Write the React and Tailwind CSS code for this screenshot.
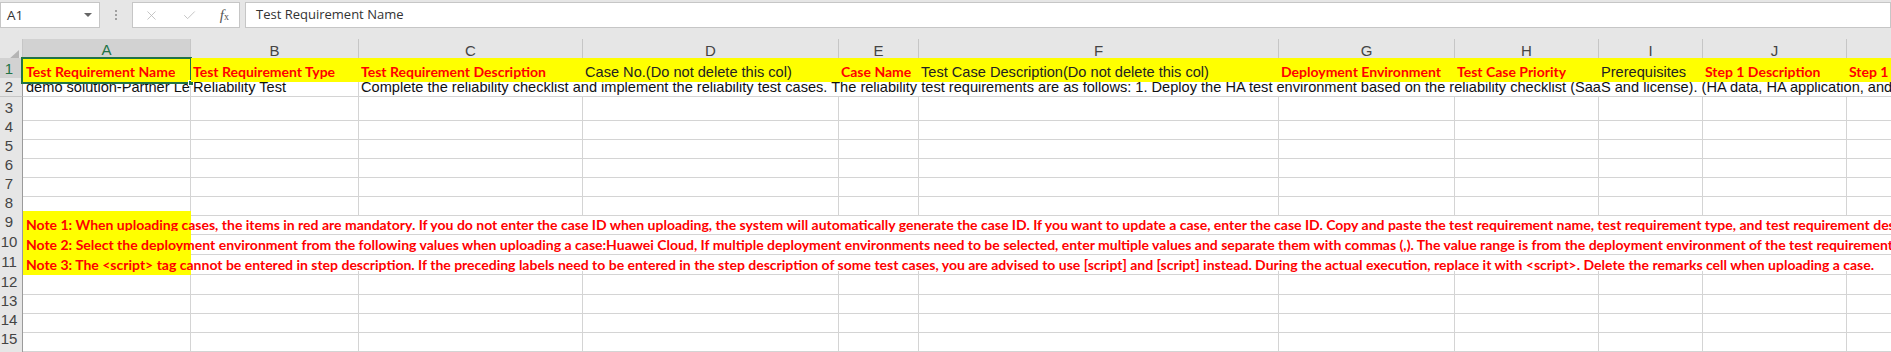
import React from 'react';
import { X, Check } from 'lucide-react';

const grid =
  'grid w-max grid-cols-[23px_168px_168px_224px_256px_80px_360px_176px_144px_104px_144px_144px]';
const bold = "font-['Lato',sans-serif] font-bold text-[14px] text-[#ff0000]";
const plain = "font-['Liberation_Sans',sans-serif] text-[14.6px]";
const line = 'border-r border-b border-[#d4d4d4]';

const letters = ['A', 'B', 'C', 'D', 'E', 'F', 'G', 'H', 'I', 'J', 'K'];

const headerCells = [
  { t: 'Test Requirement Name', red: true },
  { t: 'Test Requirement Type', red: true },
  { t: 'Test Requirement Description', red: true },
  { t: 'Case No.(Do not delete this col)' },
  { t: 'Case Name', red: true },
  { t: 'Test Case Description(Do not delete this col)' },
  { t: 'Deployment Environment', red: true },
  { t: 'Test Case Priority', red: true },
  { t: 'Prerequisites' },
  { t: 'Step 1 Description', red: true },
  { t: 'Step 1 Expected Result', red: true },
];

const notes = [
  'Note 1: When uploading cases, the items in red are mandatory. If you do not enter the case ID when uploading, the system will automatically generate the case ID. If you want to update a case, enter the case ID. Copy and paste the test requirement name, test requirement type, and test requirement description from the test requirement list.',
  'Note 2: Select the deployment environment from the following values when uploading a case:Huawei Cloud, If multiple deployment environments need to be selected, enter multiple values and separate them with commas (,). The value range is from the deployment environment of the test requirement.',
  'Note 3: The <script> tag cannot be entered in step description. If the preceding labels need to be entered in the step description of some test cases, you are advised to use [script] and [script] instead. During the actual execution, replace it with <script>. Delete the remarks cell when uploading a case.',
];

function RowHead({ n, active }) {
  return (
    <div
      className={`flex items-center justify-center pr-[4px] border-b border-r font-['Liberation_Sans',sans-serif] text-[15px] ${
        active
          ? 'bg-[#d2d2d2] text-[#217346] border-b-[#c6c6c6] border-r-[#217346]'
          : 'bg-[#e6e6e6] text-[#444] border-b-[#c6c6c6] border-r-[#9b9b9b]'
      }`}
    >
      {n}
    </div>
  );
}

function EmptyRow({ n }) {
  return (
    <div className={`${grid} h-[19px]`}>
      <RowHead n={n} />
      {letters.map((l) => (
        <div key={l} className={line} />
      ))}
    </div>
  );
}

function Toolbar() {
  return (
    <div className="h-[39px] bg-[#e6e6e6] pt-[2px] flex items-start">
      <div className="w-[100px] h-[26px] bg-white border border-[#c6c6c6] flex items-center justify-between pl-[6px] pr-[7px]">
        <span className="font-['Open_Sans',sans-serif] text-[13.5px] text-[#333]">A1</span>
        <span className="w-0 h-0 border-l-[4px] border-r-[4px] border-t-[4px] border-l-transparent border-r-transparent border-t-[#666]" />
      </div>
      <div className="w-[32px] h-[26px] flex flex-col items-center justify-center gap-[2px]">
        <span className="w-[2px] h-[2px] bg-[#a0a0a0]" />
        <span className="w-[2px] h-[2px] bg-[#a0a0a0]" />
        <span className="w-[2px] h-[2px] bg-[#a0a0a0]" />
      </div>
      <div className="w-[108px] h-[26px] bg-white border border-[#c6c6c6] flex items-center justify-between pl-[11px] pr-[10px]">
        <X size={15} strokeWidth={1.3} className="text-[#b8b8b8]" />
        <Check size={15} strokeWidth={1.3} className="text-[#b8b8b8]" />
        <span className="font-['Liberation_Serif',serif] italic text-[15px] text-[#555] leading-none">
          f<span className="text-[10px] not-italic">x</span>
        </span>
      </div>
      <div className="ml-[5px] flex-1 h-[26px] bg-white border border-[#c6c6c6] flex items-center pl-[10px]">
        <span className="font-['Open_Sans',sans-serif] text-[13px] text-[#333]">Test Requirement Name</span>
      </div>
    </div>
  );
}

export default function App() {
  return (
    <div className="w-[1891px] h-[352px] overflow-hidden bg-white">
      <Toolbar />

      {/* column letters */}
      <div className={`${grid} h-[19px] bg-[#e6e6e6]`}>
        <div className="border-r border-b border-r-[#c6c6c6] border-b-[#9b9b9b] flex items-end justify-end p-[3px]">
          <svg width="11" height="10" viewBox="0 0 11 10">
            <polygon points="11,0 11,10 0,10" fill="#b4b4b4" />
          </svg>
        </div>
        {letters.map((l, i) => (
          <div
            key={l}
            className={`flex items-center justify-center font-['Liberation_Sans',sans-serif] text-[15px] border-r border-r-[#c6c6c6] ${
              i === 0
                ? 'bg-[#d2d2d2] text-[#217346] border-b-2 border-b-[#217346]'
                : 'text-[#444] border-b border-b-[#9b9b9b]'
            }`}
          >
            {l}
          </div>
        ))}
      </div>

      {/* row 1 */}
      <div className={`${grid} h-[20px]`}>
        <RowHead n={1} active />
        {headerCells.map((c, i) => (
          <div
            key={c.t}
            className={`relative bg-[#ffff00] flex items-end pb-[1px] whitespace-nowrap ${
              i === 0 ? 'pl-[3px]' : 'pl-[2px]'
            } ${c.red ? bold : `${plain} text-[#222]`} leading-[18px]`}
          >
            <span className="overflow-hidden">{c.t}</span>
            {i === 0 && (
              <div className="absolute -left-[2px] -top-[1px] -right-[1px] -bottom-[2px] border-2 border-[#217346]">
                <span className="absolute -right-[4px] -bottom-[4px] w-[6px] h-[6px] bg-[#217346] border border-white" />
              </div>
            )}
          </div>
        ))}
      </div>

      {/* row 2 */}
      <div className={`${grid} h-[19px] ${plain} text-[#111] leading-[18px]`}>
        <RowHead n={2} />
        <div className={`${line} pl-[3px] whitespace-nowrap overflow-hidden flex items-end`}>
          demo solution-Partner Level
        </div>
        <div className={`${line} pl-[2px] whitespace-nowrap overflow-hidden flex items-end`}>
          Reliability Test
        </div>
        <div className="col-span-9 border-b border-[#d4d4d4] pl-[2px] whitespace-nowrap overflow-hidden flex items-end">
          Complete the reliability checklist and implement the reliability test cases. The reliability test requirements are as follows: 1. Deploy the HA test environment based on the reliability checklist (SaaS and license). (HA data, HA application, and HA network)
        </div>
      </div>

      {[3, 4, 5, 6, 7, 8].map((n) => (
        <EmptyRow key={n} n={n} />
      ))}

      {notes.map((t, i) => (
        <div key={i} className={`${grid} h-[20px]`}>
          <RowHead n={9 + i} />
          <div className="col-span-11 flex overflow-hidden">
            <div className={`w-[168px] shrink-0 bg-[#ffff00] relative z-10 whitespace-nowrap flex items-end pl-[3px] pb-[1px] leading-[18px] ${bold}`}>
              {t}
            </div>
            <div className="flex-1 border-b border-[#d4d4d4]" />
          </div>
        </div>
      ))}

      {[12, 13, 14, 15, 16].map((n) => (
        <EmptyRow key={n} n={n} />
      ))}
    </div>
  );
}
